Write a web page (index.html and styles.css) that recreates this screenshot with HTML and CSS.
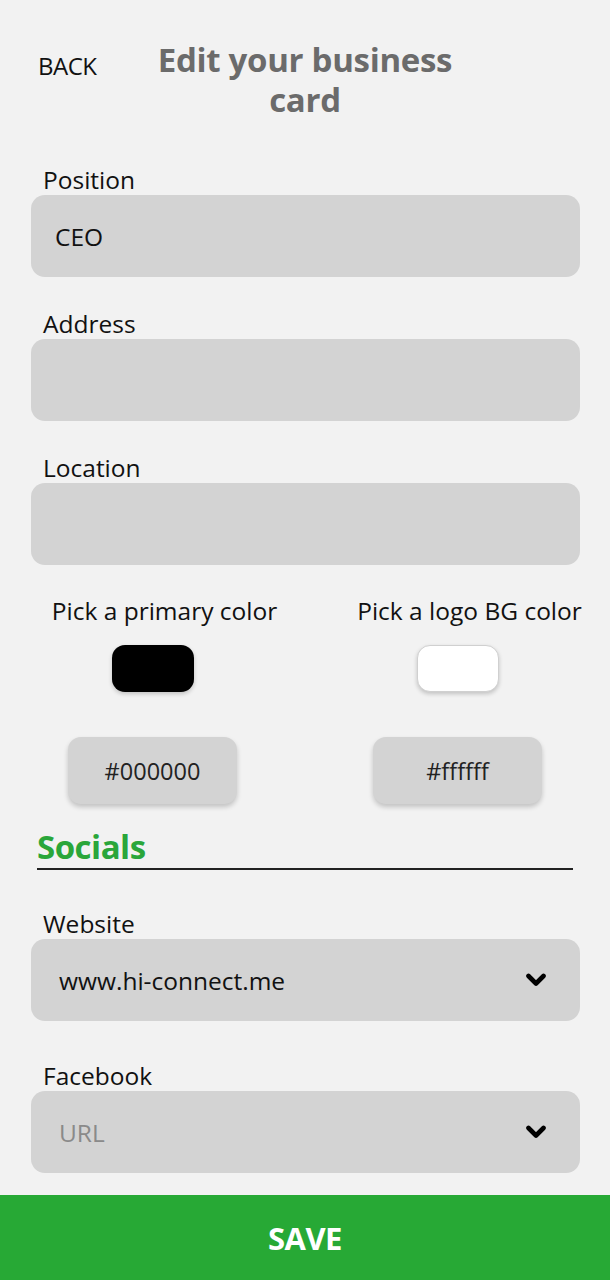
FILE: index.html
```html
<!DOCTYPE html>
<html lang="en">
<head>
    <meta charset="UTF-8">
    <meta name="viewport" content="width=device-width, initial-scale=1.0">
    <title>Edit your business card</title>
    <link rel="stylesheet" href="styles.css">
</head>
<body>
    <div class="screen">
        <header class="header">
            <a class="back" href="#">BACK</a>
            <h1>Edit your business card</h1>
        </header>

        <div class="scroll">
            <div class="scroll-inner">
                <div class="field">
                    <label>Position</label>
                    <div class="input">CEO</div>
                </div>
                <div class="field">
                    <label>Address</label>
                    <div class="input"></div>
                </div>
                <div class="field">
                    <label>Location</label>
                    <div class="input"></div>
                </div>

                <div class="colors">
                    <div class="color-col">
                        <span class="color-label">Pick a primary color</span>
                        <div class="swatch swatch-black"></div>
                        <div class="hex">#000000</div>
                    </div>
                    <div class="color-col">
                        <span class="color-label">Pick a logo BG color</span>
                        <div class="swatch swatch-white"></div>
                        <div class="hex">#ffffff</div>
                    </div>
                </div>

                <h2 class="section-title">Socials</h2>

                <div class="field social">
                    <label>Website</label>
                    <div class="input select">
                        <span>www.hi-connect.me</span>
                        <svg class="chevron" width="22" height="14" viewBox="0 0 22 14"><polyline points="3.5,3 11,10.5 18.5,3" fill="none" stroke="#000" stroke-width="4.6" stroke-linecap="round" stroke-linejoin="round"/></svg>
                    </div>
                </div>
                <div class="field social">
                    <label>Facebook</label>
                    <div class="input select">
                        <span class="placeholder">URL</span>
                        <svg class="chevron" width="22" height="14" viewBox="0 0 22 14"><polyline points="3.5,3 11,10.5 18.5,3" fill="none" stroke="#000" stroke-width="4.6" stroke-linecap="round" stroke-linejoin="round"/></svg>
                    </div>
                </div>
            </div>
        </div>

        <button class="save">SAVE</button>
    </div>
</body>
</html>
```

FILE: styles.css
```css
body { margin: 0; background-color: #f2f2f2; font-family: 'Open Sans', sans-serif; color: #111; }
.screen { height: 1280px; display: flex; flex-direction: column; }

.header {
    height: 168px;
    display: grid;
    grid-template-columns: 1fr 310px 1fr;
    align-items: start;
}
.back { color: #111; text-decoration: none; font-size: 24px; padding: 49px 0 0 38px; letter-spacing: -0.5px; }
.header h1 {
    margin: 40px 0 0;
    font-size: 33px;
    line-height: 40px;
    font-weight: 700;
    color: #6b6b6b;
    text-align: center;
    letter-spacing: -0.3px;
}

.scroll { flex: 1; overflow: hidden; }
.scroll-inner { margin-top: -3px; padding: 0 30px 0 31px; }

.field { display: flex; flex-direction: column; margin-bottom: 32px; }
.field label { font-size: 24.5px; line-height: 30px; padding-left: 12px; }
.input {
    height: 82px;
    background-color: #d3d3d3;
    border-radius: 14px;
    padding: 0 24px;
    display: flex;
    align-items: center;
    font-size: 24.5px;
    box-sizing: border-box;
}
.select { justify-content: space-between; padding: 0 33px 0 28px; }
.placeholder { color: #8a8a8a; }
.social { margin-bottom: 40px; }

.colors { display: grid; grid-template-columns: 1fr 1fr; margin: -1px -30px 0 -31px; }
.color-col { display: flex; flex-direction: column; align-items: center; }
.color-label { font-size: 24.5px; line-height: 30px; padding-left: 24px; white-space: nowrap; }
.swatch { width: 82px; height: 47px; border-radius: 13px; margin-top: 19px; box-shadow: 0 2px 4px rgba(0,0,0,0.2); box-sizing: border-box; }
.swatch-black { background-color: #000; }
.swatch-white { background-color: #fff; border: 1px solid #d0d0d0; }
.hex {
    width: 169px;
    height: 67px;
    margin-top: 45px;
    border-radius: 13px;
    background-color: #d3d3d3;
    box-shadow: 0 3px 5px rgba(0,0,0,0.2);
    display: flex;
    align-items: center;
    justify-content: center;
    font-size: 23.5px;
    color: #222;
}

.section-title {
    margin: 24px 7px 39px 6px;
    padding-bottom: 2px;
    font-size: 33px;
    line-height: 38px;
    color: #2aa63a;
    border-bottom: 2px solid #222;
    letter-spacing: -0.5px;
}

.save {
    height: 85px;
    border: none;
    background-color: #27a935;
    color: #fff;
    font-family: 'Open Sans', sans-serif;
    font-size: 31px;
    font-weight: 700;
    letter-spacing: -0.5px;
}
```
